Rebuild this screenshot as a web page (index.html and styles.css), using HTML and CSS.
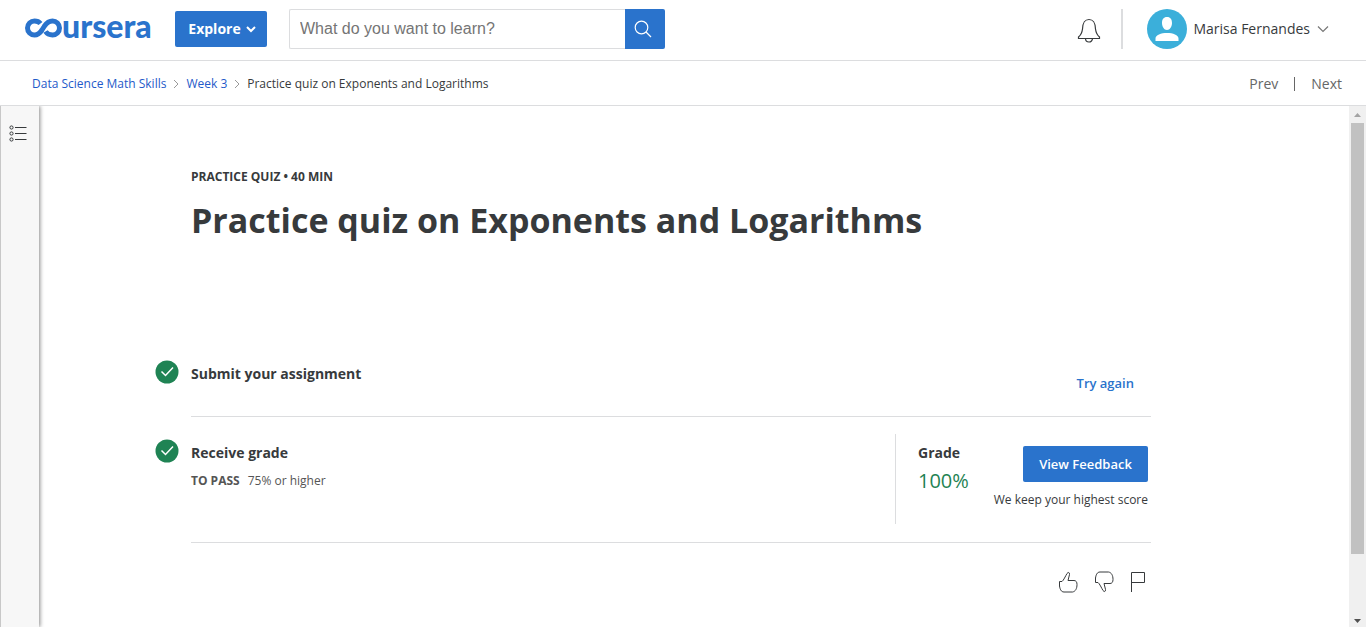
FILE: index.html
```html
<!DOCTYPE html>
<html lang="en">
<head>
<meta charset="utf-8">
<title>Practice quiz on Exponents and Logarithms | Coursera</title>
<link rel="stylesheet" href="styles.css">
</head>
<body>
<header class="topbar">
  <a class="logo" href="#" aria-label="Coursera home">
    <svg class="logo-mark" width="38" height="20" viewBox="0 0 38 20" fill="none" stroke="currentColor" stroke-width="5">
      <path d="M16.500 5.500C15 3.700 13 3 10.500 3A6.900 6.900 0 0 0 10.500 17C14 17 16 15 18 12L20.500 8C22.500 5 25 3 28.500 3A6.900 6.900 0 0 1 28.500 17C25.500 17 23 15.800 21.500 13.500"/>
    </svg>
    <span class="logo-text">ursera</span>
  </a>
  <button class="explore" type="button">Explore
    <svg width="10" height="8" viewBox="0 0 10 8" fill="none" stroke="currentColor" stroke-width="2"><path d="M1 2l4 4 4-4"/></svg>
  </button>
  <form class="search" role="search">
    <input class="search-input" type="text" placeholder="What do you want to learn?" aria-label="What do you want to learn?">
    <button class="search-button" type="button" aria-label="Search">
      <svg width="18" height="18" viewBox="0 0 18 18" fill="none" stroke="currentColor" stroke-width="1.200"><circle cx="7.500" cy="7.500" r="6.300"/><path d="M12 12l5 5"/></svg>
    </button>
  </form>
  <div class="account">
    <button class="bell" type="button" aria-label="Notifications">
      <svg width="24" height="26" viewBox="0 0 24 26" fill="none" stroke="currentColor" stroke-width="1.200"><path d="M1.500 20.500V19C4 17 5 15 5.500 11 5.800 5 7 1.500 12 1.500S18.200 5 18.500 11C19 15 20 17 22.500 19v1.500zM8.500 20.500a3.500 3.500 0 0 0 7 0"/></svg>
    </button>
    <button class="user" type="button">
      <svg class="avatar" width="40" height="40" viewBox="0 0 40 40"><circle cx="20" cy="20" r="20" fill="#3bafda"/><path fill="#fff" d="M20 8c3.500 0 5 2.500 5 6s-2 7-5 7-5-3.500-5-7 1.500-6 5-6zM8.500 32v-2.500C8.500 26 14 24 20 24s11.500 2 11.500 5.500V32z"/></svg>
      <span>Marisa Fernandes</span>
      <svg width="12" height="8" viewBox="0 0 12 8" fill="none" stroke="#777" stroke-width="1.200"><path d="M1 1.500l5 5 5-5"/></svg>
    </button>
  </div>
</header>
<nav class="subbar" aria-label="Breadcrumb">
  <div class="crumbs">
    <a href="#">Data Science Math Skills</a>
    <svg width="6" height="10" viewBox="0 0 6 10" fill="none" stroke="#999"><path d="M1 1l4 4-4 4"/></svg>
    <a href="#">Week 3</a>
    <svg width="6" height="10" viewBox="0 0 6 10" fill="none" stroke="#999"><path d="M1 1l4 4-4 4"/></svg>
    <span>Practice quiz on Exponents and Logarithms</span>
  </div>
  <div class="pager">
    <a href="#">Prev</a>
    <a class="next" href="#">Next</a>
  </div>
</nav>
<div class="workspace">
  <aside class="rail">
    <button class="rail-button" type="button" aria-label="Show contents">
      <svg width="18" height="18" viewBox="0 0 18 18" fill="none" stroke="currentColor"><circle cx="2.500" cy="3.500" r="1.600"/><circle cx="2.500" cy="9.500" r="1.600"/><circle cx="2.500" cy="15.500" r="1.600"/><path d="M6 3.500h11.500M6 9.500h11.500M6 15.500h11.500"/></svg>
    </button>
  </aside>
  <main class="content">
    <div class="quiz">
      <p class="kind">PRACTICE QUIZ • 40 MIN</p>
      <h1 class="title">Practice quiz on Exponents and Logarithms</h1>
      <section class="step step-submit">
        <svg class="check" width="24" height="24" viewBox="0 0 24 24"><circle cx="12" cy="12" r="11.500" fill="#1f8354"/><path d="M6.500 11.500l4 4 7.500-8" fill="none" stroke="#fff" stroke-width="1.500"/></svg>
        <h2 class="step-title">Submit your assignment</h2>
        <a class="retry" href="#">Try again</a>
      </section>
      <section class="step step-grade">
        <svg class="check" width="24" height="24" viewBox="0 0 24 24"><circle cx="12" cy="12" r="11.500" fill="#1f8354"/><path d="M6.500 11.500l4 4 7.500-8" fill="none" stroke="#fff" stroke-width="1.500"/></svg>
        <div class="receive">
          <h2 class="step-title">Receive grade</h2>
          <p class="pass"><strong>TO PASS</strong><span>75% or higher</span></p>
        </div>
        <div class="result">
          <div class="grade">
            <h2 class="step-title">Grade</h2>
            <p class="score">100%</p>
          </div>
          <div class="feedback">
            <button class="view" type="button">View Feedback</button>
            <p class="note">We keep your highest score</p>
          </div>
        </div>
      </section>
      <div class="reactions">
        <button type="button" aria-label="Like"><svg width="20" height="22" viewBox="0 0 20 22" fill="none" stroke="currentColor"><path d="M1.500 10.500H4C5.500 9.500 7.500 5 9 2.500 10 1 12 1.200 11.500 3.500L10 9.500H16c2 0 3 1.500 3 4 0 4-1.500 7-4.500 7.500H6c-3 0-4-3-4.500-6z"/></svg></button>
        <button type="button" aria-label="Dislike"><svg width="20" height="22" viewBox="0 0 20 22" fill="none" stroke="currentColor"><path d="M1.500 11.500H4C5.500 12.500 7.500 17 9 19.500 10 21 12 20.800 11.500 18.500L10 12.500H16c2 0 3-1.500 3-4 0-4-1.500-7-4.500-7.500H6c-3 0-4 3-4.500 6z"/></svg></button>
        <button type="button" aria-label="Report"><svg width="16" height="22" viewBox="0 0 16 22" fill="none" stroke="currentColor"><path d="M1.500 21V1.500h13v10h-13"/></svg></button>
      </div>
    </div>
  </main>
  <div class="scrollbar" aria-hidden="true">
    <svg width="17" height="17" viewBox="0 0 17 17"><path d="M5 11l3.500-4 3.500 4z" fill="#a3a3a3"/></svg>
    <div class="thumb"></div>
    <svg class="down" width="17" height="17" viewBox="0 0 17 17"><path d="M5 9l3.500 4L12 9z" fill="#505050"/></svg>
  </div>
</div>
</body>
</html>
```
FILE: styles.css
```css
* { box-sizing: border-box; }
body {
  margin: 0;
  height: 100vh;
  display: flex;
  flex-direction: column;
  font-family: "Open Sans", sans-serif;
  font-size: 14px;
  line-height: 20px;
  color: #373a3c;
  background: #fff;
}
h1, h2, p { margin: 0; }
a { color: #2a73cc; text-decoration: none; }
button {
  padding: 0;
  border: 0;
  background: none;
  color: inherit;
  font: inherit;
  cursor: pointer;
}
svg { display: block; flex: none; }

.topbar {
  flex: none;
  display: flex;
  align-items: center;
  height: 61px;
  padding: 0 37px 3px 24px;
  border-bottom: 1px solid #dcdddf;
}
.logo { display: flex; align-items: center; width: 127px; height: 40px; margin-right: 24px; color: #2a73cc; }
.logo-mark { margin-bottom: 2px; }
.logo-text { font-family: Lato, sans-serif; font-weight: 900; font-size: 32px; line-height: 32px; padding-bottom: 6px; }
.explore {
  display: flex;
  align-items: center;
  justify-content: center;
  gap: 5px;
  width: 92px;
  height: 36px;
  padding-left: 2px;
  border-radius: 2px;
  background: #2a73cc;
  color: #fff;
  font-weight: 700;
}
.search { display: flex; width: 376px; height: 40px; margin-left: 22px; }
.search-input {
  flex: 1;
  min-width: 0;
  padding: 0 10px;
  border: 1px solid #dcdddf;
  border-right: 0;
  border-radius: 2px 0 0 2px;
  font-family: "Liberation Sans", Arial, sans-serif;
  font-size: 16px;
  color: #373a3c;
}
.search-input::placeholder { color: #757575; }
.search-button {
  display: flex;
  align-items: center;
  justify-content: center;
  width: 40px;
  padding-right: 4px;
  border-radius: 0 2px 2px 0;
  background: #2a73cc;
  color: #fff;
}
.account { display: flex; align-items: center; margin-left: auto; }
.bell { padding: 4px 20px 0 0; }
.user {
  display: flex;
  align-items: center;
  height: 40px;
  padding-left: 24px;
  border-left: 2px solid #dcdddf;
}
.avatar { margin-right: 6px; }
.user span { margin-right: 7px; }

.subbar {
  flex: none;
  display: flex;
  align-items: center;
  justify-content: space-between;
  height: 45px;
  padding: 2px 24px 0 32px;
  border-bottom: 1px solid #dcdddf;
}
.crumbs { display: flex; align-items: center; gap: 7px; font-size: 12px; }
.crumbs a { color: #1f5ac9; }
.pager { display: flex; align-items: center; line-height: 14px; }
.pager a { color: #666; }
.pager .next { margin-left: 16px; padding-left: 16px; border-left: 1px solid #666; }

.workspace { flex: 1; min-height: 0; display: flex; }
.rail {
  flex: none;
  width: 39px;
  padding: 18px 0 0 8px;
  border-left: 1px solid #c8c8c8;
  background: #f7f7f7;
  box-shadow: 1px 0 4px #888;
  clip-path: inset(0 -6px 0 0);
}
.content { flex: 1; min-width: 0; padding: 61px 198px 0 116px; overflow: hidden; }
.kind { padding-left: 36px; font-size: 12px; font-weight: 700; }
.title { padding-left: 36px; margin-top: 9px; font-size: 34px; line-height: 48px; font-weight: 700; }
.step { display: flex; position: relative; margin-left: 36px; border-bottom: 1px solid #dcdddf; }
.check { position: absolute; left: -36px; }
.step-title { font-size: 14px; line-height: 20px; font-weight: 700; }
.step-submit { margin-top: 116px; height: 57px; justify-content: space-between; padding: 4px 17px 0 0; }
.step-submit .check { top: 0; }
.retry { padding-top: 9px; font-size: 13px; font-weight: 600; }
.step-grade { height: 126px; padding: 17px 3px 18px 0; justify-content: space-between; }
.step-grade .check { top: 22px; }
.receive { padding-top: 9px; }
.pass { display: flex; gap: 8px; margin-top: 8px; font-size: 12px; color: #555; }
.pass strong { font-weight: 700; }
.result { display: flex; width: 253px; justify-content: space-between; border-left: 1px solid #dcdddf; padding-left: 22px; }
.grade { padding-top: 9px; }
.score { margin-top: 4px; font-size: 20px; line-height: 28px; color: #1f8354; }
.feedback { display: flex; flex-direction: column; align-items: flex-end; padding-top: 12px; }
.view { width: 125px; height: 36px; border-radius: 2px; background: #2a73cc; color: #fff; font-size: 13px; font-weight: 600; }
.note { margin-top: 8px; font-size: 12px; white-space: nowrap; }
.reactions { display: flex; justify-content: flex-end; gap: 16px; padding: 28px 5px 0 0; }

.scrollbar { flex: none; display: flex; flex-direction: column; width: 17px; background: #f0f0f0; }
.thumb { flex: 0 1 431px; width: 13px; margin-left: 2px; background: #c1c1c1; }
.down { margin-top: auto; }
```
